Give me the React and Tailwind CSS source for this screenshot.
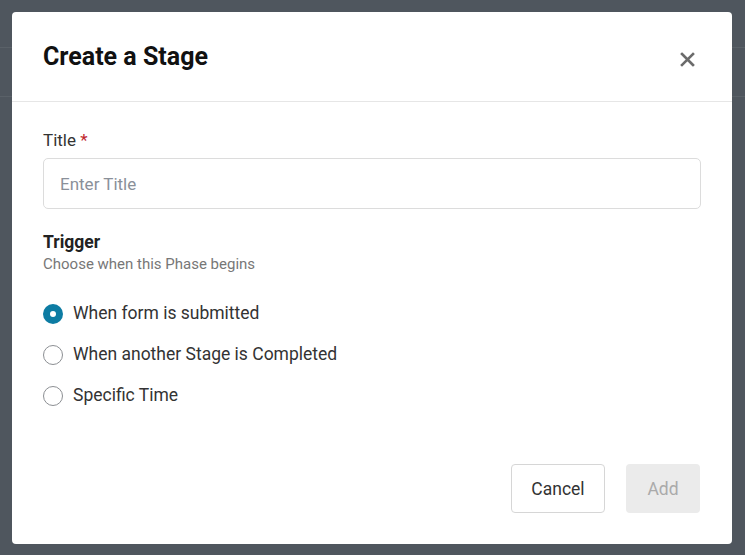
import { useState } from "react";

const OPTIONS = [
  "When form is submitted",
  "When another Stage is Completed",
  "Specific Time",
];

const Radio = ({ checked }) => (
  <span
    className={
      checked
        ? "flex h-5 w-5 shrink-0 items-center justify-center rounded-full bg-[#0d7ca3]"
        : "h-5 w-5 shrink-0 rounded-full border border-[#8c8f93] bg-white"
    }
  >
    {checked ? <span className="h-[6px] w-[6px] rounded-full bg-white" /> : null}
  </span>
);

const App = () => {
  const [trigger, setTrigger] = useState(0);
  const [title, setTitle] = useState("");

  return (
    <div className="relative h-[555px] w-full overflow-hidden bg-[#4f565e] font-['Roboto',sans-serif]">
      {/* page behind the overlay */}
      <div className="absolute inset-x-0 top-[47px] border-t border-[#5a6168]" />
      <div className="absolute inset-x-0 top-[96px] border-t border-[#5a6168]" />

      <div className="relative flex h-full p-3 pb-[11px]">
        <div className="flex h-full w-[720px] flex-col rounded-[4px] bg-white">
          <div className="flex h-[90px] shrink-0 items-center justify-between border-b border-[#e6e6e6] pl-[31px] pr-[37px]">
            <h2 className="text-[25px] font-bold text-[#111]">Create a Stage</h2>
            <button className="mt-[6px] text-[#6b6b6b]">
              <svg width="15" height="15" viewBox="0 0 15 15" fill="none">
                <path d="M2 2l11 11M13 2L2 13" stroke="currentColor" strokeWidth="2.6" strokeLinecap="square" />
              </svg>
            </button>
          </div>

          <div className="flex-1 px-[31px] pt-[26px]">
            <label className="block text-[17px] leading-6 text-[#333]">
              Title <span className="text-[#c0262d]">*</span>
            </label>
            <input
              value={title}
              onChange={(e) => setTitle(e.target.value)}
              placeholder="Enter Title"
              className="mt-[6px] h-[51px] w-[658px] rounded-[5px] border border-[#dcdcdc] px-4 text-[17px] text-[#333] outline-none placeholder:text-[#8a9099]"
            />

            <div className="mt-[21px] text-[17.5px] font-bold leading-6 text-[#222]">Trigger</div>
            <div className="text-[15px] leading-5 text-[#777]">Choose when this Phase begins</div>

            <div className="mt-[19px] flex flex-col">
              {OPTIONS.map((label, i) => (
                <button
                  key={label}
                  onClick={() => setTrigger(i)}
                  className="flex h-[41px] items-center gap-[10px] text-left text-[17.5px] text-[#333]"
                >
                  <Radio checked={trigger === i} />
                  {label}
                </button>
              ))}
            </div>
          </div>

          <div className="flex shrink-0 justify-end gap-[21px] pb-[31px] pr-[32px]">
            <button className="h-[49px] w-[94px] rounded-[4px] border border-[#d6d6d6] bg-white pt-[2px] text-[17.5px] text-[#333]">
              Cancel
            </button>
            <button disabled className="h-[49px] w-[74px] rounded-[4px] bg-[#ebebeb] pt-[2px] text-[17.5px] text-[#aaaaaa]">
              Add
            </button>
          </div>
        </div>
      </div>
    </div>
  );
};

export default App;
